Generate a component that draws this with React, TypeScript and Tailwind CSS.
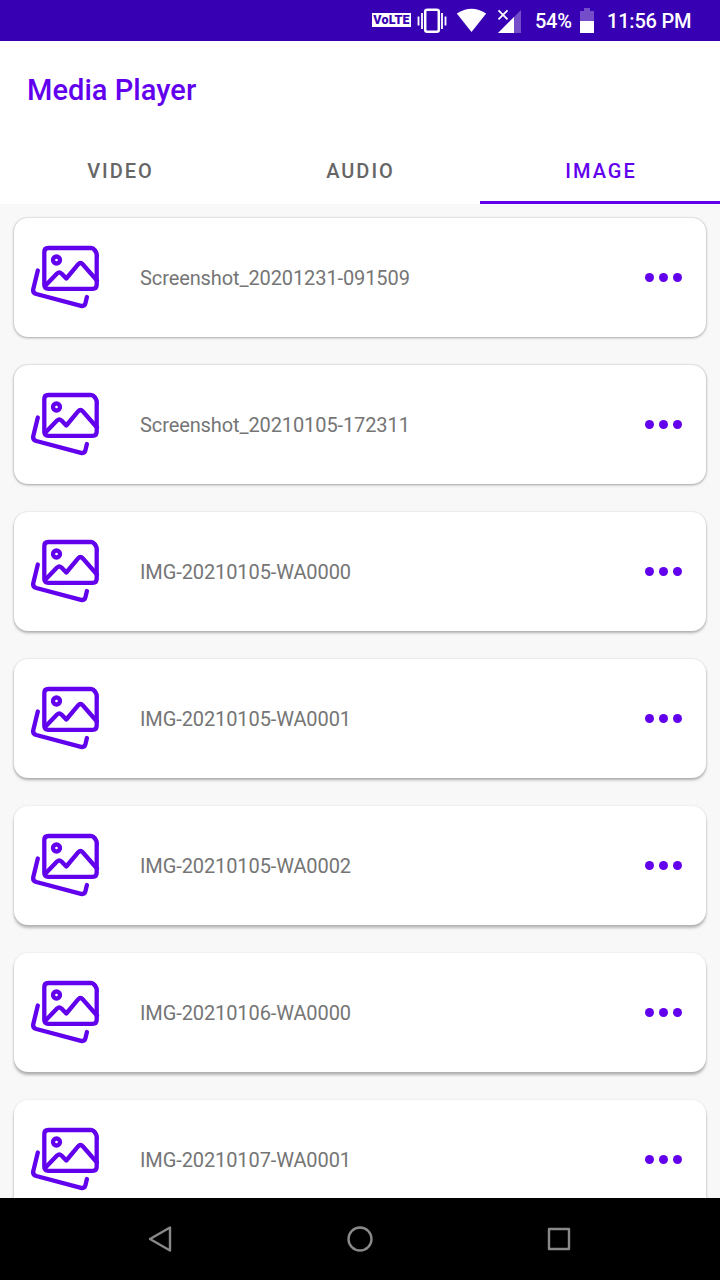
import React from "react";

const files = [
  "Screenshot_20201231-091509",
  "Screenshot_20210105-172311",
  "IMG-20210105-WA0000",
  "IMG-20210105-WA0001",
  "IMG-20210105-WA0002",
  "IMG-20210106-WA0000",
  "IMG-20210107-WA0001",
];

const shadows = [
  "shadow-[0_1px_3px_rgba(0,0,0,0.28),0_0_2px_rgba(0,0,0,0.2)]",
  "shadow-[0_1px_3px_rgba(0,0,0,0.32),0_0_2px_rgba(0,0,0,0.18)]",
  "shadow-[0_2px_3px_rgba(0,0,0,0.28),0_0_2px_rgba(0,0,0,0.15)]",
  "shadow-[0_2px_3px_rgba(0,0,0,0.3),0_0_2px_rgba(0,0,0,0.14)]",
  "shadow-[0_3px_3px_rgba(0,0,0,0.26),0_0_2px_rgba(0,0,0,0.13)]",
  "shadow-[0_3px_3px_rgba(0,0,0,0.28),0_0_2px_rgba(0,0,0,0.12)]",
  "shadow-[0_3px_3px_rgba(0,0,0,0.28),0_0_2px_rgba(0,0,0,0.12)]",
];

function StatusBar() {
  return (
    <header className="flex h-[41px] shrink-0 items-center bg-[#3700b3] pl-[372px] text-xl font-medium text-white">
      <span className="mb-px flex h-[14px] w-[39px] items-center justify-center bg-white text-[12.5px] leading-none font-black tracking-[0.2px] text-[#3700b3]">
        VoLTE
      </span>
      <svg className="ml-[6px] h-[26px] w-[30px]" viewBox="417 8 30 26" fill="none" stroke="white">
        <rect x="425.2" y="9.7" width="13.6" height="22" rx="2" strokeWidth="2.5" />
        <path d="M422 13V29M418.5 16.5V25.5M442 13V29M445.5 16.5V25.5" strokeWidth="1.8" />
      </svg>
      <svg className="ml-[9px] h-[26px] w-[32px]" viewBox="456 8 32 26" fill="white">
        <path d="M456.8 13.5Q471.5 3.8 486.2 13.5L471.5 32Z" />
      </svg>
      <svg className="ml-[9px] h-[26px] w-[26px]" viewBox="497 8 26 26" fill="white">
        <path d="M498 33L521 10V33Z" fillOpacity="0.3" />
        <path d="M498 33L514 17V33Z" />
        <path d="M498.5 10.3L507.5 19.3M507.5 10.3L498.5 19.3" stroke="white" strokeWidth="1.8" />
      </svg>
      <span className="ml-[12px] w-[37px] pt-px tracking-[-0.3px] whitespace-nowrap">54%</span>
      <svg className="ml-[8px] h-[26px] w-[14px]" viewBox="580 8 14 26" fill="white">
        <path d="M584 8H590V11H594V21H580V11H584Z" fillOpacity="0.3" />
        <path d="M580 21H594V33H580Z" />
      </svg>
      <span className="ml-[13px] pt-px tracking-[-0.2px] whitespace-nowrap">11:56 PM</span>
    </header>
  );
}

function PhotosIcon() {
  return (
    <svg
      className="ml-[16px] h-[72px] w-[72px] shrink-0"
      viewBox="30 242 72 72"
      fill="none"
      stroke="#6200ee"
      strokeWidth="4.3"
      strokeLinecap="round"
      strokeLinejoin="round"
    >
      <path d="M48 248H91C94 248.5 96.7 252 96.7 255V284.7Q96.7 288.8 92.7 288.8H48.3Q44.3 288.8 44.3 284.8V252Q44.3 248 48.3 248Z" />
      <path d="M91 245.8Q98.9 247 98.9 258L94 252Z" fill="#6200ee" stroke="none" />
      <circle cx="56.5" cy="260" r="3.5" />
      <path d="M45 286L57 273.5Q59.3 271.5 61.5 273.5L66.3 278.5L78.3 264.2Q80.5 261.8 82.7 264.2L97 280.5" />
      <path d="M37.8 270.5L33.3 289Q32.5 292.8 36.3 294L81 305.8Q84.6 306.6 85.5 303L86.9 297" />
    </svg>
  );
}

function FileCard({ name, shadow }: { name: string; shadow: string }) {
  return (
    <article className={`flex h-[119px] shrink-0 items-center rounded-[14px] bg-white ${shadow}`}>
      <PhotosIcon />
      <span className="ml-[38px] grow pt-px text-[20px] leading-6 tracking-[-0.1px] text-[#757575]">{name}</span>
      <button aria-label="More options" className="mr-[24px] flex gap-[5px]">
        <i className="size-[9px] rounded-full bg-[#6200ee]" />
        <i className="size-[9px] rounded-full bg-[#6200ee]" />
        <i className="size-[9px] rounded-full bg-[#6200ee]" />
      </button>
    </article>
  );
}

export default function App() {
  return (
    <div className="flex h-[1280px] w-[720px] flex-col overflow-hidden bg-[#f8f8f8] font-['Roboto',sans-serif]">
      <StatusBar />
      <div className="flex h-[98px] shrink-0 items-center bg-white pl-[27px]">
        <h1 className="text-[29px] leading-8 font-medium tracking-[0.05px] text-[#6200ee]">Media Player</h1>
      </div>
      <nav className="grid h-[65px] shrink-0 grid-cols-3 bg-white text-[20px] font-medium tracking-[2px] text-[#666666]">
        <button className="border-b-3 border-transparent pt-[2px] pl-px">VIDEO</button>
        <button className="border-b-3 border-transparent pt-[2px] pl-px">AUDIO</button>
        <button className="border-b-3 border-[#6200ee] pt-[2px] pl-[2px] text-[#6200ee]">IMAGE</button>
      </nav>
      <main className="flex h-[994px] shrink-0 flex-col gap-[28px] overflow-hidden px-[14px] pt-[14px]">
        {files.map((name, i) => (
          <FileCard key={name} name={name} shadow={shadows[i]} />
        ))}
      </main>
      <footer className="flex h-[82px] shrink-0 items-center bg-black">
        <svg className="ml-[147px] size-[26px]" viewBox="147 1226 26 26" fill="none" stroke="#898989" strokeWidth="2.4" strokeLinejoin="round">
          <path d="M150 1239L170 1227.5V1250.5Z" />
        </svg>
        <svg className="ml-[174px] size-[26px]" viewBox="347 1226 26 26" fill="none" stroke="#898989" strokeWidth="2.4">
          <circle cx="360" cy="1239" r="11.5" />
        </svg>
        <svg className="ml-[173px] size-[26px]" viewBox="546 1226 26 26" fill="none" stroke="#898989" strokeWidth="2.4" strokeLinejoin="round">
          <path d="M549 1229H569V1249H549Z" />
        </svg>
      </footer>
    </div>
  );
}
